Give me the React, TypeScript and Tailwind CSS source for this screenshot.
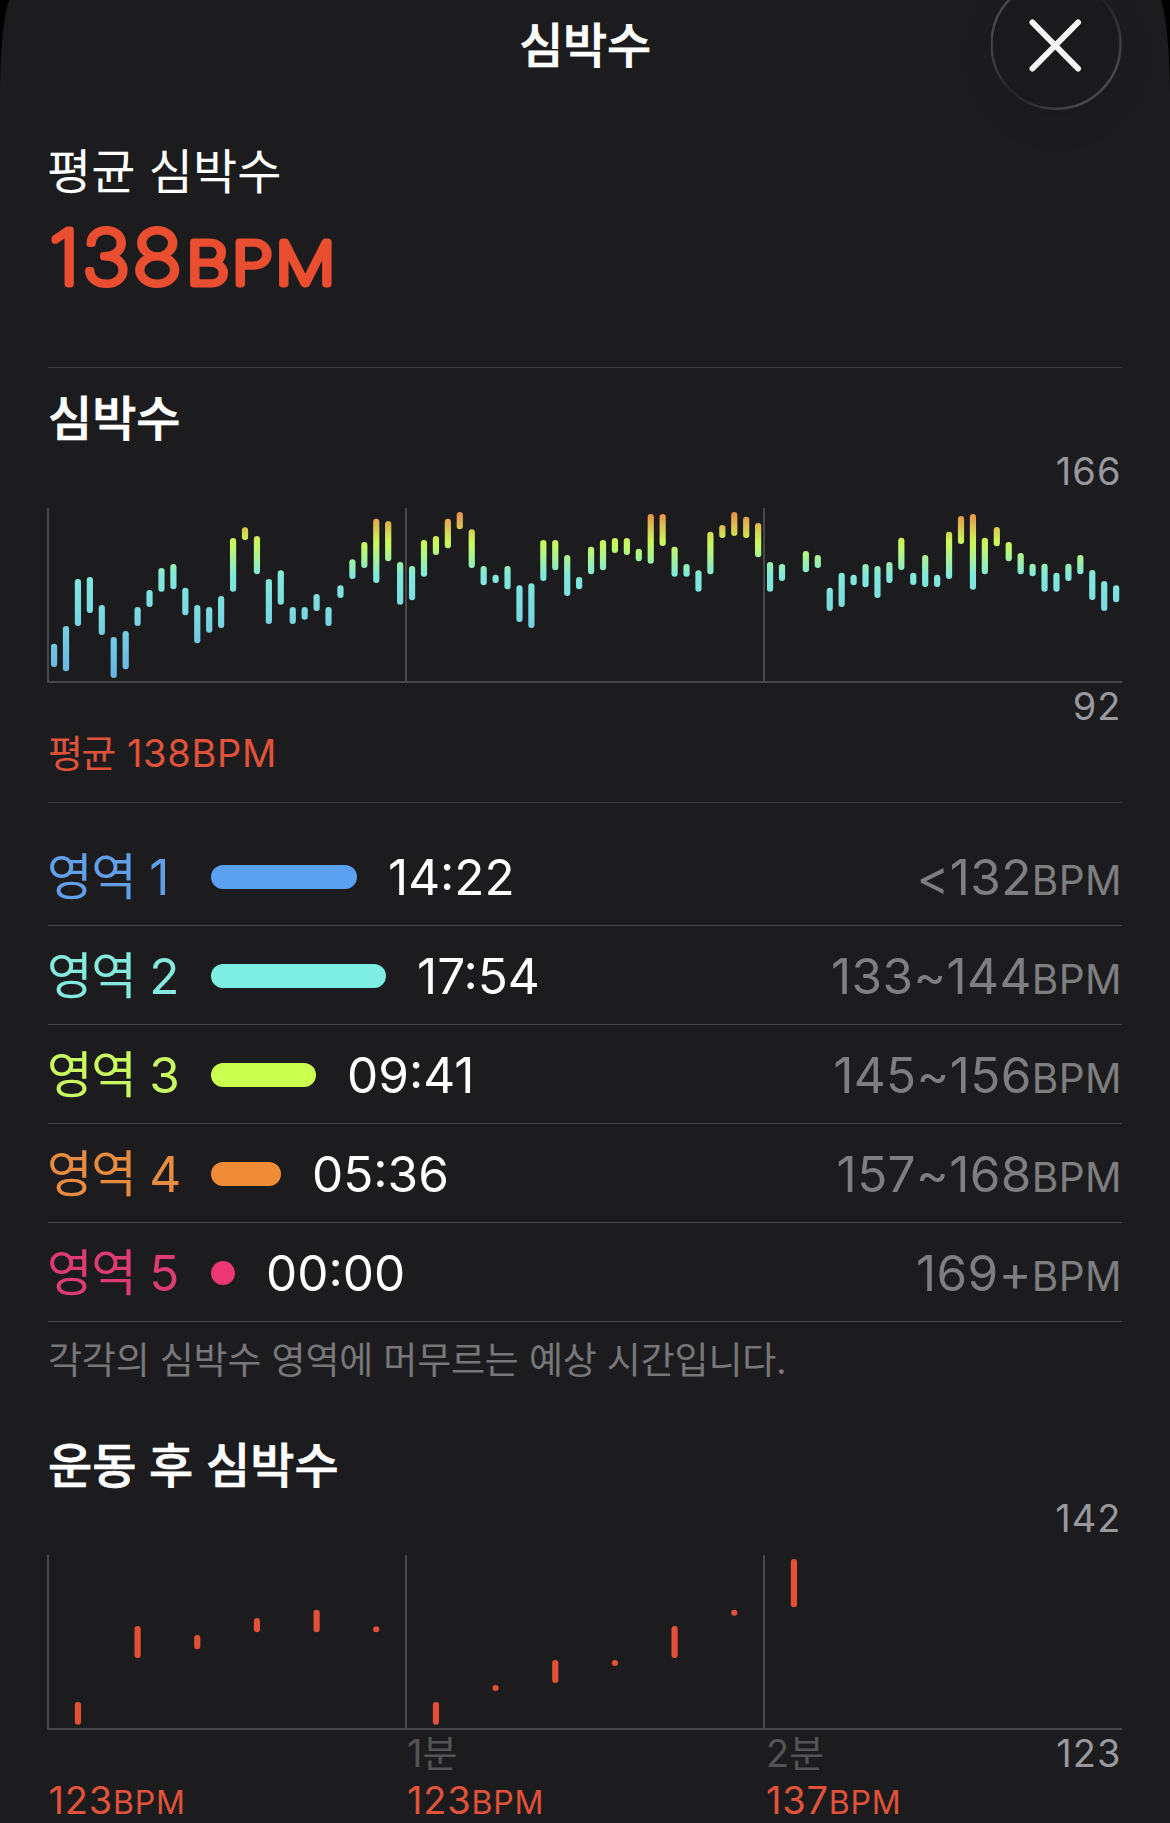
import React from "react";

const FONT = "font-['Inter','Noto_Sans_CJK_KR',sans-serif]";

// [top, bottom] of each sample, in thirds of a pixel below the chart's top edge.
const WORKOUT: Array<[number, number] | null> = [
  [407, 477], [354, 490], [213, 354], [207, 315], [291, 381], [387, 510], [369, 484], [297, 354], [246, 297], [180, 251],
  [168, 244], [239, 322], [291, 406], [297, 374], [264, 360], [90, 251], [58, 96], [84, 199], [213, 348], [187, 290],
  [297, 348], [297, 335], [258, 309], [297, 354], [232, 270], [154, 213], [102, 180], [32, 225], [39, 160], [162, 290],
  [174, 277], [96, 206], [84, 141], [32, 121], [12, 64], [64, 180], [174, 232], [200, 225], [174, 244], [232, 342],
  [226, 360], [96, 219], [96, 187], [141, 264], [207, 244], [116, 199], [96, 187], [90, 135], [90, 141], [122, 160],
  [18, 167], [18, 114], [116, 206], [168, 206], [187, 251], [71, 199], [51, 90], [12, 84], [26, 90], [45, 148],
  [162, 251], [168, 219], null, [129, 193], [141, 180], [239, 309], [194, 297], [200, 232], [168, 238], [174, 270],
  [162, 225], [89, 186], [194, 231], [141, 237], [200, 237], [71, 213], [24, 108], [18, 245], [89, 199], [57, 115],
  [102, 160], [135, 199], [167, 205], [167, 251], [194, 251], [167, 219], [141, 199], [186, 276], [219, 309], [232, 283],
];

const RECOVERY: Array<[number, number] | null> = [
  [441, 509], [213, 309], [240, 283], [189, 232], [164, 232], [214, 232],
  [441, 509], [390, 408], [315, 384], [315, 333], [213, 309], [164, 182],
  [12, 157], null, null, null, null, null,
];

const ZONES = [
  { n: 1, text: "text-[#619fe9]", bar: "bg-[#5ba1f2]", width: 146, time: "14:22", range: "<132" },
  { n: 2, text: "text-[#84eade]", bar: "bg-[#7deee1]", width: 175, time: "17:54", range: "133~144" },
  { n: 3, text: "text-[#c9fb60]", bar: "bg-[#caff4f]", width: 105, time: "09:41", range: "145~156" },
  { n: 4, text: "text-[#e78b40]", bar: "bg-[#f08b36]", width: 70, time: "05:36", range: "157~168" },
  { n: 5, text: "text-[#dc3c72]", bar: "bg-[#ec3773]", width: 24, time: "00:00", range: "169+" },
];

function RangeChart({ data, fill }: { data: Array<[number, number] | null>; fill: string }) {
  const step = 1074 / data.length;
  return (
    <svg className="mt-[14.5px] block overflow-visible" width="1074" height="175" viewBox="0 0 1074 175">
      <defs>
        <linearGradient id="intensity" gradientUnits="userSpaceOnUse" x1="0" y1="4" x2="0" y2="174">
          <stop offset="0" stopColor="#e98c4a" />
          <stop offset="0.17" stopColor="#cdf45a" />
          <stop offset="0.2" stopColor="#c3f965" />
          <stop offset="0.37" stopColor="#80e9dc" />
          <stop offset="0.6" stopColor="#7ad9e2" />
          <stop offset="1" stopColor="#66b1e6" />
        </linearGradient>
      </defs>
      <path d="M0 0V175M358 0V174M716 0V174M-1 174H1074" stroke="#48484a" strokeWidth="2" fill="none" />
      {data.map((d, i) =>
        d ? (
          <rect key={i} x={step * (i + 0.5) - 3} y={d[0] / 3} width="6.2" height={(d[1] - d[0]) / 3} rx="3" fill={fill} />
        ) : null
      )}
    </svg>
  );
}

function Heading({ children }: { children: React.ReactNode }) {
  return (
    <h2 className="text-[48px] leading-[60px] font-medium [-webkit-text-stroke:0.7px_white]">{children}</h2>
  );
}

function ScaleLabel({ children, className }: { children: React.ReactNode; className: string }) {
  return (
    <p className={`pr-[0.4px] text-right text-[38px] leading-[46px] tracking-[1.1px] text-[#98989e] ${className}`}>
      {children}
    </p>
  );
}

function RecoveryValue({ value, className }: { value: number; className: string }) {
  return (
    <span className={`tracking-[0.8px] ${className}`}>
      {value}
      <span className="text-[32px] leading-none">BPM</span>
    </span>
  );
}

export default function App() {
  return (
    <main className={`relative h-[1823px] w-[1170px] overflow-hidden bg-[#1c1c1e] px-12 text-white ${FONT}`}>
      <svg className="absolute top-0 left-0" width="1170" height="90" viewBox="0 0 1170 90">
        <path d="M0 0H9C4 16 1 40 0 90ZM1170 0H1161C1166 16 1169 40 1170 90Z" fill="#000" />
      </svg>

      <header className="grid h-[110px] grid-cols-[131px_1fr_131px]">
        <span />
        <h1 className="pt-4 text-center text-[48px] leading-[60px] font-medium tracking-[-0.3px] [-webkit-text-stroke:0.7px_white]">
          심박수
        </h1>
        <button aria-label="닫기" className="-mt-[21.5px] h-[131px] w-[131px] rounded-full shadow-[0_12px_40px_rgba(0,0,0,0.07)]">
          <svg width="131" height="131" viewBox="0 0 131 131" fill="none">
            <defs>
              <linearGradient id="rim" x1="0.1" y1="0.35" x2="0.72" y2="0.95">
                <stop offset="0" stopColor="#48484a" />
                <stop offset="0.5" stopColor="#222224" />
                <stop offset="1" stopColor="#48484a" />
              </linearGradient>
            </defs>
            <circle cx="65" cy="65.2" r="64.5" fill="#1a1a1c" stroke="url(#rim)" strokeWidth="2.5" />
            <path d="M41.5 43.5L87 89.5M87 43.5L41.5 89.5" stroke="#f4f4f7" strokeWidth="6" strokeLinecap="round" />
          </svg>
        </button>
      </header>

      <section className="h-[257px] pt-[31.5px]">
        <p className="-ml-px text-[48px] leading-[60px]">평균 심박수</p>
        <svg className="block overflow-visible" width="300" height="100" viewBox="0 0 300 100">
          <g fontWeight="100" fill="#e94e30" stroke="#e94e30" strokeWidth="6.8" strokeLinejoin="round">
            <text transform="translate(1.5 82.2) scale(1.1 1)" fontSize="73.8" textLength="120" lengthAdjust="spacing">
              138
            </text>
            <text transform="translate(138.5 82.2) scale(1.17 1)" fontSize="57" textLength="127" lengthAdjust="spacing">
              BPM
            </text>
          </g>
        </svg>
      </section>

      <section className="border-t border-[#3a3a3c] pt-[20.5px]">
        <Heading>심박수</Heading>
        <ScaleLabel className="-mt-px">166</ScaleLabel>
        <RangeChart data={WORKOUT} fill="url(#intensity)" />
        <ScaleLabel className="mt-0">92</ScaleLabel>
        <p className="mt-px text-[38px] leading-[46px] tracking-[0.7px] text-[#e0533a]">
          <span className="tracking-[-1.7px]">평균</span>
          <span className="pl-px"> 138BPM</span>
        </p>
      </section>

      <section className="mt-[26px] border-t border-[#3a3a3c] pt-6">
        {ZONES.map((z) => (
          <div key={z.n} className="flex h-[99px] items-center border-b border-[#48484a] pt-[2px] text-[49.5px] leading-[60px]">
            <span className={`-ml-px w-[164px] ${z.text}`}>
              <span className="tracking-[-1.4px]">영역</span> {z.n}
            </span>
            <span className={`h-6 rounded-full ${z.bar}`} style={{ width: z.width }} />
            <span className="ml-[31px]">{z.time}</span>
            <span className="ml-auto tracking-[0.4px] text-[#7e7e80]">
              {z.range}
              <span className="text-[40.5px] leading-none">BPM</span>
            </span>
          </div>
        ))}
        <p className="mt-[15.5px] text-[37px] leading-[46px] tracking-[-0.19px] text-[#77777a]">
          각각의 심박수 영역에 머무르는 예상 시간입니다.
        </p>
      </section>

      <section className="mt-[52px]">
        <Heading>운동 후 심박수</Heading>
        <ScaleLabel className="-mt-px">142</ScaleLabel>
        <RangeChart data={RECOVERY} fill="#e25037" />
        <div className="grid grid-cols-[358px_358px_1fr] text-[38px] leading-[46px] text-[#545457]">
          <span />
          <span className="pl-px">1분</span>
          <span className="flex justify-between pl-0.5">
            2분<span className="pr-[0.4px] tracking-[1.1px] text-[#98989e]">123</span>
          </span>
        </div>
        <div className="mt-px grid grid-cols-[358px_358px_1fr] text-[38px] leading-[46px] text-[#e0533a]">
          <RecoveryValue value={123} className="pl-[0.5px]" />
          <RecoveryValue value={123} className="pl-px" />
          <RecoveryValue value={137} className="pl-0.5" />
        </div>
      </section>
    </main>
  );
}
